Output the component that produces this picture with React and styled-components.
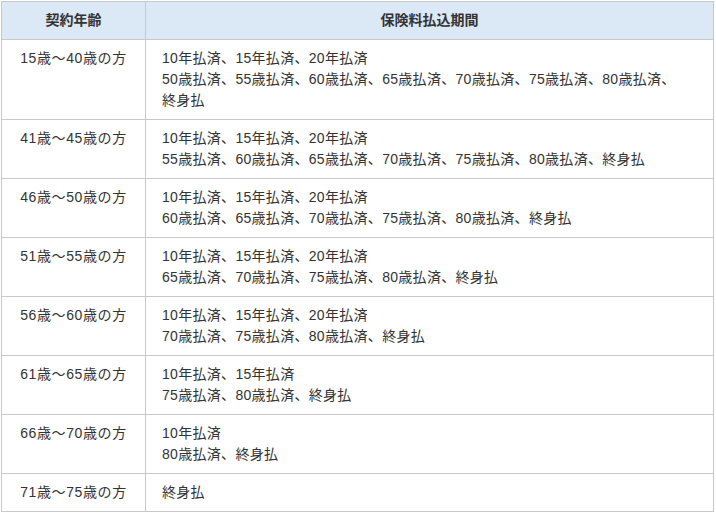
import React from "react";
import styled, { createGlobalStyle } from "styled-components";

const GlobalStyle = createGlobalStyle`
  body {
    margin: 0;
    background: #fff;
    font-family: "Liberation Sans", "Noto Sans CJK JP", sans-serif;
    color: #333;
  }
`;

const Wrap = styled.div`
  padding: 1px;
`;

const Table = styled.table`
  width: 713px;
  border-collapse: collapse;
  font-size: 14px;
  line-height: 21px;
`;

const Head = styled.th`
  background: #dbe8f6;
  border: 1px solid #c8c8c8;
  padding: 8px 16px;
  font-weight: bold;
  text-align: center;
  width: ${(p) => p.$width || "auto"};
  box-sizing: border-box;
`;

const AgeCell = styled.td`
  border: 1px solid #c8c8c8;
  padding: 8px 12px;
  text-align: center;
  vertical-align: top;
  white-space: nowrap;
  letter-spacing: 0.6px;
`;

const TermCell = styled.td`
  border: 1px solid #c8c8c8;
  padding: 8px 16px;
  vertical-align: top;
  letter-spacing: 0.3px;
`;

const Line = styled.div``;

const Item = styled.span`
  white-space: nowrap;
`;

const rows = [
  ["15歳～40歳の方", "10年払済、15年払済、20年払済", "50歳払済、55歳払済、60歳払済、65歳払済、70歳払済、75歳払済、80歳払済、終身払"],
  ["41歳～45歳の方", "10年払済、15年払済、20年払済", "55歳払済、60歳払済、65歳払済、70歳払済、75歳払済、80歳払済、終身払"],
  ["46歳～50歳の方", "10年払済、15年払済、20年払済", "60歳払済、65歳払済、70歳払済、75歳払済、80歳払済、終身払"],
  ["51歳～55歳の方", "10年払済、15年払済、20年払済", "65歳払済、70歳払済、75歳払済、80歳払済、終身払"],
  ["56歳～60歳の方", "10年払済、15年払済、20年払済", "70歳払済、75歳払済、80歳払済、終身払"],
  ["61歳～65歳の方", "10年払済、15年払済", "75歳払済、80歳払済、終身払"],
  ["66歳～70歳の方", "10年払済", "80歳払済、終身払"],
  ["71歳～75歳の方", "終身払"],
];

function Terms({ text }) {
  const parts = text.split("、");
  return (
    <Line>
      {parts.map((p, i) => (
        <Item key={i}>{i < parts.length - 1 ? p + "、" : p}</Item>
      ))}
    </Line>
  );
}

export default function App() {
  return (
    <Wrap>
      <GlobalStyle />
      <Table>
        <thead>
          <tr>
            <Head $width="144px">契約年齢</Head>
            <Head>保険料払込期間</Head>
          </tr>
        </thead>
        <tbody>
          {rows.map(([age, ...lines]) => (
            <tr key={age}>
              <AgeCell>{age}</AgeCell>
              <TermCell>
                {lines.map((l) => (
                  <Terms key={l} text={l} />
                ))}
              </TermCell>
            </tr>
          ))}
        </tbody>
      </Table>
    </Wrap>
  );
}
